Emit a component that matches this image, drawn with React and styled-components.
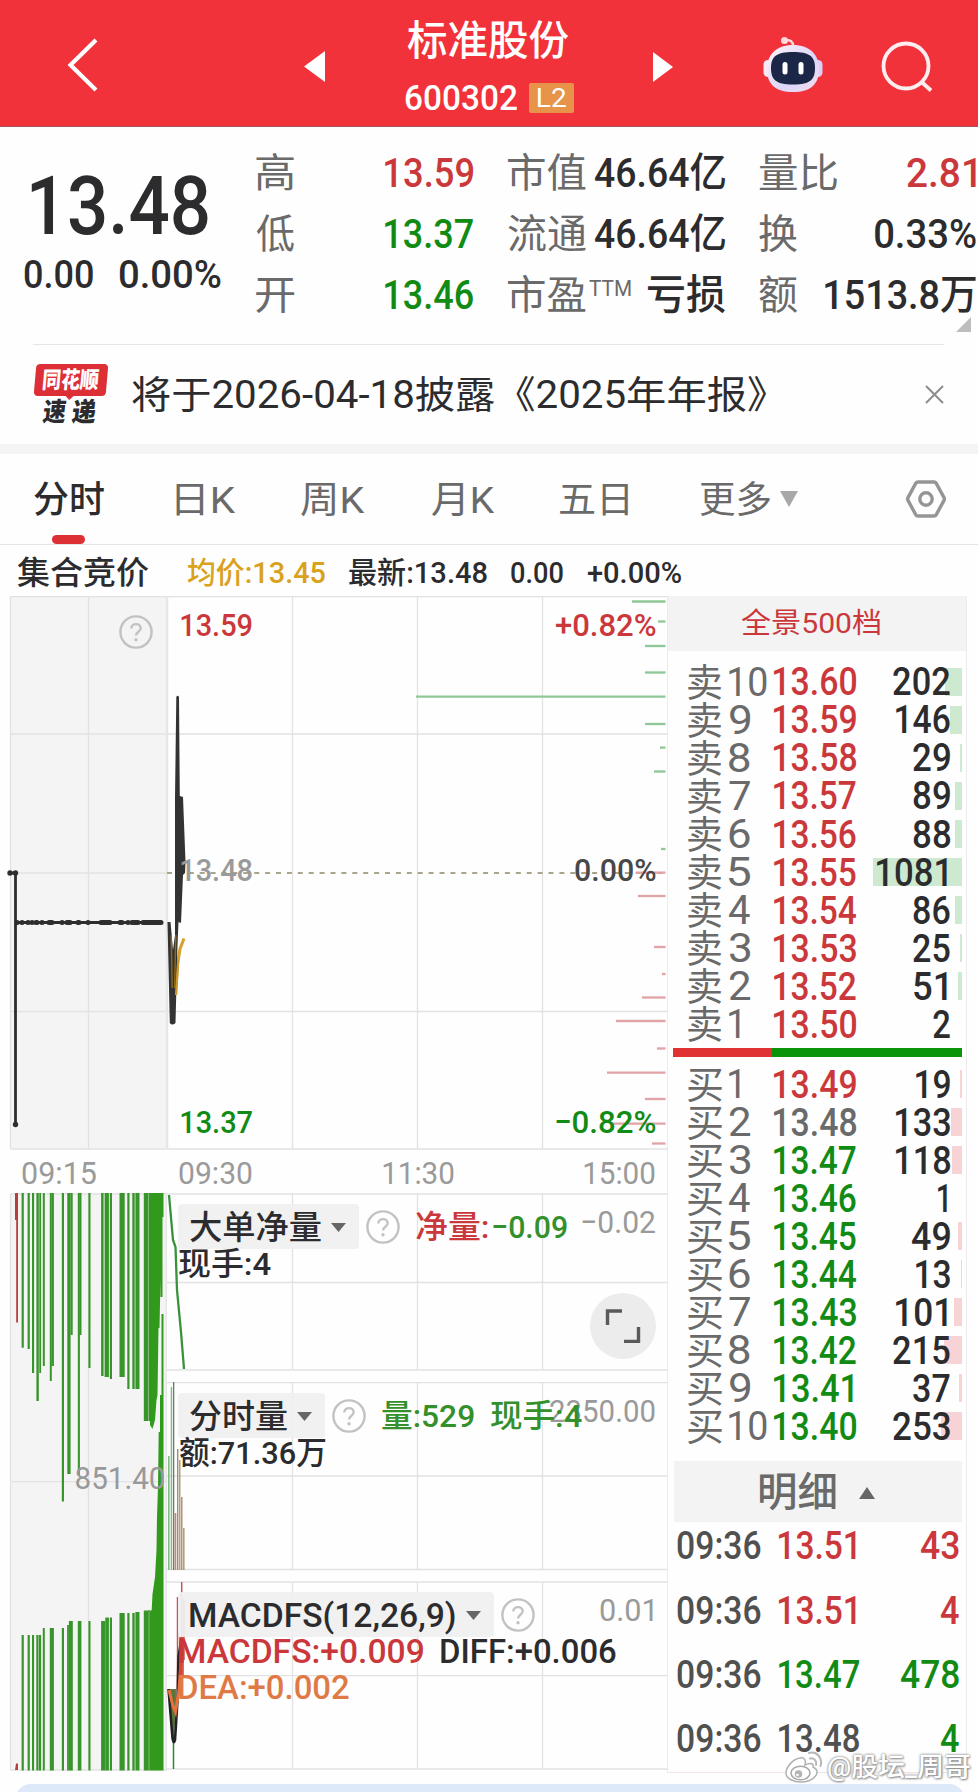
import React, { useLayoutEffect, useState } from "react";
import styled, { createGlobalStyle } from "styled-components";

const FONT = '"Roboto", "Noto Sans CJK SC", sans-serif';
const RED = "#cb383c";
const GREEN = "#118b14";
const INK = "#2c2c2e";
const GRAY = "#6a6a6a";
const MUTE = "#9a9a9a";

const Global = createGlobalStyle`
  * { box-sizing: border-box; }
  body { margin: 0; background: #fefefe; font-family: ${FONT}; }
  svg { display: block; flex-shrink: 0; }
`;

/* ---------- text that is condensed to a given ink width ---------- */

const FitBox = styled.span`
  display: block;
  flex-shrink: 0;
  width: ${(p) => p.$w}px;
  height: ${(p) => p.$size}px;
  margin-left: ${(p) => p.$ml || 0}px;
  margin-right: ${(p) => p.$mr || 0}px;
  position: relative;
`;

const FitInner = styled.span`
  display: inline-block;
  white-space: pre;
  transform-origin: 0 50%;
  font-family: ${FONT};
  font-size: ${(p) => p.$size}px;
  font-weight: ${(p) => p.$weight};
  line-height: ${(p) => p.$size}px;
  color: ${(p) => p.$color};
  text-shadow: ${(p) => p.$shadow || "none"};
`;

let canvas;
function measure(text, size, weight) {
  canvas = canvas || document.createElement("canvas");
  const ctx = canvas.getContext("2d");
  ctx.font = `${weight} ${size}px ${FONT}`;
  const m = ctx.measureText(text);
  return { left: m.actualBoundingBoxLeft, width: m.actualBoundingBoxLeft + m.actualBoundingBoxRight };
}

function Fit({ children, w, size, color = INK, weight = 500, ml, mr, shadow }) {
  const [t, setT] = useState("none");
  useLayoutEffect(() => {
    const m = measure(children, size, weight);
    const k = w / m.width;
    setT(`translateX(${m.left * k}px) scaleX(${k})`);
  }, [children, w, size, weight]);
  return (
    <FitBox $w={w} $size={size} $ml={ml} $mr={mr}>
      <FitInner $size={size} $weight={weight} $color={color} $shadow={shadow} style={{ transform: t }}>
        {children}
      </FitInner>
    </FitBox>
  );
}

/* ---------- header ---------- */

const Page = styled.div`
  width: 978px;
  height: 1792px;
  overflow: hidden;
  background: #fefefe;
`;

const Header = styled.header`
  height: 127px;
  background: #f2323a;
  border-bottom: 1px solid #a4545a;
  display: flex;
`;

const Slot = styled.div`
  margin-left: ${(p) => p.$left}px;
  margin-top: ${(p) => p.$top}px;
  flex-shrink: 0;
`;

const TitleBlock = styled.div`
  width: 170px;
  margin-left: 80px;
  padding-top: 21px;
`;

const CodeLine = styled.div`
  display: flex;
  align-items: center;
  height: 30px;
  margin-top: 21px;
`;

const LevelBadge = styled.span`
  width: 45px;
  height: 30px;
  margin-left: 12px;
  background: #e8934a;
  border-radius: 2px;
  display: flex;
  align-items: center;
  justify-content: center;
`;

function Robot() {
  return (
    <svg width="60" height="58" viewBox="0 0 60 58">
      <defs>
        <linearGradient id="shell" x1="0" y1="0" x2="1" y2="1">
          <stop offset="0" stopColor="#fff3f6" />
          <stop offset="0.6" stopColor="#dcd6fa" />
          <stop offset="1" stopColor="#f6dcea" />
        </linearGradient>
      </defs>
      <path d="M22 4 Q30 3 30.500 11" fill="none" stroke="#ffd9dc" strokeWidth="2.500" />
      <circle cx="21.500" cy="4.500" r="3.500" fill="#ffd9dc" />
      <rect x="0.500" y="24" width="9" height="17" rx="4.500" fill="#fbeaf3" />
      <rect x="50.500" y="24" width="9" height="17" rx="4.500" fill="#d9d0f8" />
      <path d="M30 9 C47 9 56 19 56 33 C56 48 48 56 30 56 C12 56 4 48 4 33 C4 19 13 9 30 9Z" fill="url(#shell)" />
      <path d="M30 16 C46 16 52 20 52 32 C52 43 48 48.500 30 48.500 C12 48.500 8 43 8 32 C8 20 14 16 30 16Z" fill="#1c2748" />
      <rect x="19.500" y="26" width="5" height="12.500" rx="2.500" fill="#fff" />
      <rect x="35.500" y="26" width="5" height="12.500" rx="2.500" fill="#fff" />
    </svg>
  );
}

function TopBar() {
  return (
    <Header>
      <Slot $left={66} $top={38}>
        <svg width="32" height="54" viewBox="0 0 32 54">
          <path d="M30 2 L4.500 27 L30 52" fill="none" stroke="#fff" strokeWidth="4.200" />
        </svg>
      </Slot>
      <Slot $left={206} $top={51}>
        <svg width="21" height="31" viewBox="0 0 21 31"><path d="M0 15.500 L21 0 V31Z" fill="#fff" /></svg>
      </Slot>
      <TitleBlock>
        <Fit w={162} size={41} color="#fff" ml={2}>标准股份</Fit>
        <CodeLine>
          <Fit w={112} size={35} color="#fff">600302</Fit>
          <LevelBadge><Fit w={28} size={26} color="#fff" weight={400}>L2</Fit></LevelBadge>
        </CodeLine>
      </TitleBlock>
      <Slot $left={78} $top={52}>
        <svg width="20" height="30" viewBox="0 0 20 30"><path d="M20 15 L0 0 V30Z" fill="#fff" /></svg>
      </Slot>
      <Slot $left={90} $top={36}><Robot /></Slot>
      <Slot $left={58} $top={40}>
        <svg width="54" height="54" viewBox="0 0 54 54">
          <circle cx="25" cy="26" r="22.500" fill="none" stroke="#ffeef0" strokeWidth="3.800" />
          <path d="M40 41.500 L50 50.500" stroke="#ffeef0" strokeWidth="3.800" />
        </svg>
      </Slot>
    </Header>
  );
}

/* ---------- quote summary ---------- */

const Quote = styled.section`
  height: 217px;
  display: flex;
`;

const PriceBlock = styled.div`
  width: 256px;
  padding-top: 38px;
`;

const ChangeLine = styled.div`
  display: flex;
  margin-top: 9px;
  padding-left: 24px;
`;

const Stats = styled.div`
  display: grid;
  grid-template-columns: 129px 123px 87px 130px 34px 217px;
  grid-auto-rows: 61px;
  padding-top: 16px;
`;

const Cell = styled.div`
  display: flex;
  align-items: center;
  justify-content: ${(p) => (p.$end ? "flex-end" : "flex-start")};
`;

const Spread = styled(Cell)`
  grid-column: 6;
  justify-content: space-between;
`;

const Raised = styled.span`
  margin-bottom: 14px;
`;

const Fold = styled.div`
  align-self: flex-end;
  margin: 0 0 12px -20px;
`;

const STATS = [
  { l: "高", v: "13.59", c: RED, l2: "市值", v2: "46.64亿", w2: 130, l3: "量比", lw: 78, v3: "2.81", w3: 69, c3: RED },
  { l: "低", v: "13.37", c: GREEN, l2: "流通", v2: "46.64亿", w2: 130, l3: "换", lw: 38, v3: "0.33%", w3: 101, c3: INK },
  { l: "开", v: "13.46", c: GREEN, l2: "市盈", ttm: true, v2: "亏损", w2: 77, l3: "额", lw: 38, v3: "1513.8万", w3: 151, c3: INK },
];

function QuoteSummary() {
  return (
    <Quote>
      <PriceBlock>
        <Fit w={177} size={82} ml={31}>13.48</Fit>
        <ChangeLine>
          <Fit w={69} size={38}>0.00</Fit>
          <Fit w={102} size={38} ml={26}>0.00%</Fit>
        </ChangeLine>
      </PriceBlock>
      <Stats>
        {STATS.map((s) => (
          <React.Fragment key={s.l}>
            <Cell><Fit w={38} size={40} color={GRAY} weight={400}>{s.l}</Fit></Cell>
            <Cell><Fit w={88} size={41} color={s.c}>{s.v}</Fit></Cell>
            <Cell>
              <Fit w={78} size={40} color={GRAY} weight={400}>{s.l2}</Fit>
              {s.ttm && <Raised><Fit w={42} size={22} color={GRAY} weight={400} ml={3}>TTM</Fit></Raised>}
            </Cell>
            <Cell $end><Fit w={s.w2} size={41}>{s.v2}</Fit></Cell>
            <Spread>
              <Fit w={s.lw} size={40} color={GRAY} weight={400}>{s.l3}</Fit>
              <Fit w={s.w3} size={41} color={s.c3}>{s.v3}</Fit>
            </Spread>
          </React.Fragment>
        ))}
      </Stats>
      <Fold>
        <svg width="15" height="15" viewBox="0 0 15 15"><path d="M15 0 V15 H0Z" fill="#bdbdbd" /></svg>
      </Fold>
    </Quote>
  );
}

/* ---------- news ---------- */

const News = styled.section`
  height: 100px;
  margin: 0 34px 0 33px;
  border-top: 1px solid #e6e6ea;
  display: flex;
  align-items: center;
`;

const Logo = styled.div`
  width: 76px;
  height: 62px;
  margin: 0 23px 0 0;
`;

const LogoTop = styled.div`
  position: relative;
  width: 72px;
  height: 32px;
  margin-left: 2px;
  background: #dd3036;
  border-radius: 4px;
  transform: skewX(-5deg);
  display: flex;
  align-items: center;
  justify-content: center;
  &::after {
    content: "";
    position: absolute;
    left: 31px;
    top: 31px;
    border: 5px solid transparent;
    border-top-color: #dd3036;
    border-bottom: 0;
  }
`;

const LogoBottom = styled.div`
  display: flex;
  margin: 3px 0 0 10px;
  transform: skewX(-7deg);
`;

const Push = styled.div`
  margin-left: auto;
`;

function NewsRow() {
  return (
    <News>
      <Logo>
        <LogoTop><Fit w={56} size={23} color="#fff" weight={900}>同花顺</Fit></LogoTop>
        <LogoBottom>
          <Fit w={23} size={26} weight={900}>速</Fit>
          <Fit w={24} size={26} weight={900} ml={6}>递</Fit>
        </LogoBottom>
      </Logo>
      <Fit w={634} size={38} weight={400}>将于2026-04-18披露《2025年年报》</Fit>
      <Push>
        <svg width="19" height="19" viewBox="0 0 19 19"><path d="M1 1 L18 18 M18 1 L1 18" stroke="#8c8c8c" strokeWidth="2" /></svg>
      </Push>
    </News>
  );
}

/* ---------- tabs ---------- */

const Tabs = styled.nav`
  height: 101px;
  border-top: 10px solid #f4f4f4;
  border-bottom: 1px solid #e4e4e4;
  display: flex;
  align-items: center;
`;

const Tab = styled.div`
  position: relative;
  height: 90px;
  display: flex;
  align-items: center;
  padding-top: 2px;
  margin-left: ${(p) => p.$left}px;
  &::after {
    content: "";
    display: ${(p) => (p.$active ? "block" : "none")};
    position: absolute;
    bottom: 0;
    left: 18px;
    width: 33px;
    height: 9px;
    border-radius: 5px;
    background: #dd3034;
  }
`;

const TABS = [
  ["分时", 34, 70], ["日K", 72, 60], ["周K", 65, 64], ["月K", 67, 63], ["五日", 65, 68], ["更多", 72, 70],
];

function TabBar() {
  return (
    <Tabs>
      {TABS.map(([t, left, w], i) => (
        <Tab key={t} $left={left} $active={i === 0}>
          <Fit w={w} size={37} color={i ? GRAY : INK} weight={i ? 400 : 500}>{t}</Fit>
        </Tab>
      ))}
      <Slot $left={10} $top={0}>
        <svg width="18" height="16" viewBox="0 0 18 16"><path d="M0 0 H18 L9 16Z" fill="#a8a8a8" /></svg>
      </Slot>
      <Slot $left={108} $top={0}>
        <svg width="40" height="38" viewBox="0 0 40 38">
          <path d="M12 2 H28 Q29.500 2 30.300 3.400 L38 17.600 Q38.700 19 38 20.400 L30.300 34.600 Q29.500 36 28 36 H12 Q10.500 36 9.700 34.600 L2 20.400 Q1.300 19 2 17.600 L9.700 3.400 Q10.500 2 12 2Z" fill="none" stroke="#959595" strokeWidth="3.400" />
          <circle cx="20" cy="19" r="6.200" fill="none" stroke="#959595" strokeWidth="3.400" />
        </svg>
      </Slot>
    </Tabs>
  );
}

const InfoRow = styled.div`
  height: 51px;
  display: flex;
  align-items: center;
  padding: 4px 0 0 17px;
`;

/* ---------- charts ---------- */

const Main = styled.main`
  display: flex;
  height: 1177px;
`;

const ChartColumn = styled.div`
  width: 668px;
  border-right: 1px solid #ececec;
`;

const PricePanel = styled.div`
  position: relative;
  height: 554px;
`;

const Over = styled.div`
  position: absolute;
  left: ${(p) => p.$x}px;
  top: ${(p) => p.$y}px;
`;

const TimeAxis = styled.div`
  height: 43px;
  display: flex;
  align-items: center;
  padding: 3px 0 0 22px;
`;

const Lower = styled.div`
  display: flex;
`;

const SubColumn = styled.div`
  width: 501px;
`;

const SubPanel = styled.div`
  position: relative;
  height: ${(p) => p.$h}px;
  padding: 11px 0 0 11px;
  > svg { position: absolute; left: 0; top: 0; }
`;

const TagRow = styled.div`
  position: relative;
  display: flex;
  align-items: center;
  height: 45px;
`;

const Tag = styled.div`
  width: ${(p) => p.$w}px;
  height: 45px;
  background: rgba(240, 240, 240, 0.93);
  border-radius: 4px;
  display: flex;
  align-items: center;
  justify-content: space-between;
  padding: 1px 13px 0 12px;
  margin-right: 7px;
`;

const Metric = styled.div`
  position: relative;
  display: flex;
  align-items: center;
  height: 29px;
  padding-left: 1px;
  margin-top: ${(p) => p.$mt || 0}px;
`;

const Expand = styled.button`
  position: absolute;
  left: 423px;
  top: 100px;
  width: 66px;
  height: 66px;
  padding: 0;
  border: 0;
  border-radius: 50%;
  background: #ececec;
  display: flex;
  align-items: center;
  justify-content: center;
`;

const Caret = () => (
  <svg width="15" height="9" viewBox="0 0 15 9"><path d="M0 0 H15 L7.500 9Z" fill="#666" /></svg>
);

const Help = () => (
  <svg width="34" height="34" viewBox="0 0 34 34">
    <circle cx="17" cy="17" r="15.600" fill="none" stroke="#c2c2c2" strokeWidth="2.400" />
    <path d="M12.300 13.500 C12.500 7.500 21.700 7.800 21.700 13.300 C21.700 16.700 17 16.800 17 20.500" fill="none" stroke="#c2c2c2" strokeWidth="2.400" />
    <circle cx="17" cy="24.800" r="1.700" fill="#c2c2c2" />
  </svg>
);

const GRID = "#e2e2e2";

const DEPTH = [
  [601.5, 632, 1], [621.5, 658, 1], [646, 645, 1], [672.5, 645, 1], [696.7, 416, 1], [724, 645, 1], [747.6, 660, 1],
  [771.5, 654, 1], [849, 661, 1], [872.6, 636, 0], [896, 638, 0], [947, 654, 0], [974, 662, 0], [997.5, 642, 0],
  [1021, 616, 0], [1048.5, 657, 0], [1072.7, 607, 0], [1099, 645, 0], [1123.7, 612, 0], [1143.5, 652, 0],
];

const TICKS = [[17, 2], [22, 1], [28, 1], [32, 1], [36, 3], [42, 2], [49, 5], [62, 2], [67, 5], [78, 3], [88, 2], [101, 11], [120, 4], [128, 1], [132, 8], [143, 20]];

function PriceChart() {
  return (
    <PricePanel>
      <svg width="668" height="554" viewBox="0 596 668 554">
        <rect x="10.500" y="596.500" width="156.500" height="552.500" fill="#f4f4f4" />
        <path d="M10.500 596.500 H668 M10.500 734 H668 M10.500 873 H167 M10.500 1011.500 H668 M10.500 1149 H668 M10.500 596 V1149 M88.500 596 V1149 M292.500 596 V1149 M417.500 596 V1149 M542.500 596 V1149" fill="none" stroke={GRID} strokeWidth="1.300" />
        <path d="M167 596 V1149" stroke="#e6e6e6" strokeWidth="2.500" />
        <path d="M167 873 H668" stroke="#a8a58a" strokeWidth="2.200" strokeDasharray="5 5.900" />
        {DEPTH.map(([y, x, g]) => (
          <path key={y} d={`M${x} ${y} H665.500`} stroke={g ? "#8fc896" : "#e0a3a6"} strokeWidth="2.300" />
        ))}
        <path d="M10 873 H15.500 V1124.500 M15.500 922.500 H163" fill="none" stroke="#2e2e2e" strokeWidth="2.800" strokeLinejoin="round" />
        <g fill="#2e2e2e">
          <circle cx="10" cy="873" r="2.700" /><circle cx="15.500" cy="873" r="2.700" /><circle cx="15.500" cy="1124.500" r="2.700" />
        </g>
        <g stroke="#2e2e2e" strokeWidth="5" strokeLinecap="round">
          {TICKS.map(([x, w]) => <path key={x} d={`M${x} 922.500 h${Math.max(w - 2, 0.1)}`} />)}
        </g>
        <path d="M175.500 995 L177.500 965 L180 949 L184 938.500" fill="none" stroke="#d6a02a" strokeWidth="3" />
        <path d="M167.500 922 L170.500 922 L173 950 L175 935 L175 798 L176.300 697 Q177.500 694.500 179 697 L179.800 796 L183 797 L185.500 862 L185 873 L183 875 L181 923 L178.500 922 L177.500 945 L175.500 1023 Q172 1026 169.800 1023Z" fill="#333" />
        <path d="M171.200 935 L172.200 988 M175.800 935 L174.600 988" stroke="#8d6a1c" strokeWidth="1.400" />
        <path d="M176 995 L178.200 960" stroke="#c9962a" strokeWidth="2.200" />
      </svg>
      <Over $x={118.5} $y={19}><Help /></Over>
      <Over $x={181} $y={13}><Fit w={71} size={32} color={RED}>13.59</Fit></Over>
      <Over $x={181} $y={258}><Fit w={71} size={32} color={MUTE}>13.48</Fit></Over>
      <Over $x={181} $y={510}><Fit w={71} size={32} color={GREEN}>13.37</Fit></Over>
      <Over $x={556} $y={13}><Fit w={100} size={32} color={RED}>+0.82%</Fit></Over>
      <Over $x={575} $y={258}><Fit w={81} size={32} color="#484848">0.00%</Fit></Over>
      <Over $x={556} $y={510}><Fit w={100} size={32} color={GREEN}>−0.82%</Fit></Over>
    </PricePanel>
  );
}

const UPPER = [
  [21.6, 2.2, 1347.7], [27.6, 2.2, 1349], [32, 2.1, 1373], [36.4, 2.4, 1401], [39.3, 1.8, 1373], [42.8, 2, 1366], [49.8, 2, 1381],
  [51.7, 2.2, 1366], [61.8, 2.2, 1501.5], [67.3, 3.3, 1474], [70.5, 2.2, 1335], [77.8, 2.1, 1475], [79.7, 1.8, 1335], [88.4, 2.1, 1368],
  [101.1, 2.5, 1376], [104.6, 4.3, 1377], [109.8, 2.2, 1379], [119.5, 5.2, 1377], [127.3, 2.2, 1389], [132.3, 2.4, 1389],
  [135.4, 4.1, 1389], [143.8, 4.4, 1421], [148.5, 1.5, 1421],
];
const LOWER = [
  [21.6, 2.2, 1635], [27.6, 2.2, 1635], [32, 2.1, 1635], [36.3, 2.1, 1635], [38.8, 2.3, 1635], [42.8, 2, 1628], [49.8, 4.1, 1628], [61.8, 2.2, 1628],
  [67.1, 1.8, 1625], [68.9, 3.9, 1621], [77.8, 3.6, 1621], [88.4, 2.1, 1621], [101.1, 4.2, 1621], [105.3, 3.6, 1617.5],
  [109.8, 2.2, 1617.5], [119.5, 5.2, 1613], [127.3, 2.2, 1613], [132.3, 2.4, 1613], [135.4, 4.1, 1612], [143.8, 4.4, 1610.5], [148.2, 1.6, 1610],
];

function AuctionVolume() {
  return (
    <svg width="167" height="579" viewBox="0 1193 167 579">
      <rect x="10.500" y="1194" width="156.500" height="576" fill="#f4f4f4" />
      <path d="M10.500 1194 H167 M10.500 1481.700 H167 M10.500 1770 H167 M10.500 1194 V1770 M88.500 1194 V1770" fill="none" stroke={GRID} strokeWidth="1.300" />
      <path d="M166.500 1194 V1770" stroke="#e6e6e6" strokeWidth="2" />
      <path d="M15 1193 H18 V1322.500 H16.200 V1220 H15Z M15 1770 L16 1763.500 H18 V1770Z" fill="#b5403a" />
      <g fill="#38952b">
        {UPPER.map(([x, w, y]) => <rect key={x} x={x} y="1193" width={w} height={y - 1193} />)}
        {LOWER.map(([x, w, y]) => <rect key={x} x={x} y={y} width={w} height={1770.5 - y} />)}
      </g>
      <path d="M150 1193 H163.500 V1217 H162.500 V1297 H160.500 V1279 L159.500 1328 H158.500 L157.500 1395 L156.500 1400 L155 1420 L152.500 1429 L150 1425Z" fill="#319a1c" />
      <path d="M161.500 1314 H163.500 V1770.500 H150 V1611 L151.700 1610 L152.500 1594 L155 1577 L156.500 1550 L157 1517 L158 1487 L158.700 1432 H160 V1395 H161.500Z" fill="#319a1c" />
      <text x="74.500" y="1489" textLength="91" lengthAdjust="spacingAndGlyphs" fontSize="31" fontWeight="400" fontFamily={FONT} fill="#999">851.40</text>
    </svg>
  );
}

function gridPath(top, mid, bottom) {
  return `M0 ${top} H501 M0 ${mid} H501 M0 ${bottom} H501 M125.500 ${top} V${bottom} M250.500 ${top} V${bottom} M375.500 ${top} V${bottom}`;
}

const VOL = [[168, 1.6, 1456, "#7cbc80"], [170.7, 1.5, 1387, "#86b88a"], [173, 1.3, 1382, "#6e7a66"], [174.7, 1.6, 1513, "#c98472"], [177, 1.4, 1449, "#9c9070"], [179, 1.5, 1460, "#b0a182"], [181, 1.5, 1497, "#c08c70"], [183.2, 1.3, 1528, "#9c8a66"]];

function SubCharts() {
  return (
    <SubColumn>
      <SubPanel $h={189}>
        <svg width="501" height="189" viewBox="0 1193 501 189">
          <path d={gridPath(1194, 1282.5, 1370)} fill="none" stroke={GRID} strokeWidth="1.300" />
          <path d="M2 1195 L6 1240 L8.500 1247 L10 1290 L14 1332 L17 1369" fill="none" stroke="#38923a" strokeWidth="2.300" />
        </svg>
        <TagRow>
          <Tag $w={181}><Fit w={131} size={33}>大单净量</Fit><Caret /></Tag>
          <Help />
          <Fit w={72} size={32} color={RED} ml={16}>净量:</Fit>
          <Fit w={74} size={32} color="#33902a" ml={5}>−0.09</Fit>
        </TagRow>
        <Metric><Fit w={92} size={32}>现手:4</Fit></Metric>
        <Over $x={415} $y={13}><Fit w={73} size={32} color={MUTE} weight={400}>−0.02</Fit></Over>
        <Expand>
          <svg width="36" height="34" viewBox="0 0 36 34">
            <path d="M2.500 16 V2 H17 M19 32.500 H33.500 V18" fill="none" stroke="#5a5a5a" strokeWidth="3.400" />
          </svg>
        </Expand>
      </SubPanel>
      <SubPanel $h={199}>
        <svg width="501" height="199" viewBox="0 1382 501 199">
          <path d={gridPath(1382.7, 1476, 1569.5)} fill="none" stroke={GRID} strokeWidth="1.300" />
          {VOL.map(([x, w, y, c]) => <rect key={x} x={x - 167} y={y} width={w} height={1570 - y} fill={c} />)}
        </svg>
        <Over $x={383} $y={13}><Fit w={105} size={32} color={MUTE} weight={400}>2350.00</Fit></Over>
        <TagRow>
          <Tag $w={147}><Fit w={97} size={33}>分时量</Fit><Caret /></Tag>
          <Help />
          <Fit w={92} size={32} color="#33902a" ml={16}>量:529</Fit>
          <Fit w={91} size={32} color="#33902a" ml={17}>现手:4</Fit>
        </TagRow>
        <Metric><Fit w={147} size={32}>额:71.36万</Fit></Metric>
      </SubPanel>
      <SubPanel $h={191}>
        <svg width="501" height="191" viewBox="0 1581 501 191">
          <path d={gridPath(1582, 1675.7, 1769)} fill="none" stroke={GRID} strokeWidth="1.300" />
          <path d="M10.500 1597 V1690 M14.700 1582 V1680 M17 1599 V1660" stroke="#c8545a" strokeWidth="1.500" />
          <path d="M1.500 1689 H9 V1712 L6.500 1740Z" fill="#6e7440" />
          <path d="M6.500 1690 V1769" stroke="#33803a" strokeWidth="1.500" />
          <path d="M1.500 1689 L5.500 1738 Q6.500 1745 8 1740 L10.500 1700 L11.500 1657 L14.500 1638" fill="none" stroke="#222" strokeWidth="2.600" />
          <path d="M2 1690 L6 1706 L8.500 1712 L12 1690 L13.500 1668 L16 1636" fill="none" stroke="#e8703a" strokeWidth="3" />
          <path d="M12 1637 H17 V1675 H12Z" fill="#d8382f" opacity="0.750" />
        </svg>
        <TagRow>
          <Tag $w={316}><Fit w={265} size={33}>MACDFS(12,26,9)</Fit><Caret /></Tag>
          <Help />
        </TagRow>
        <Metric>
          <Fit w={244} size={33} color={RED}>MACDFS:+0.009</Fit>
          <Fit w={175} size={33} ml={18}>DIFF:+0.006</Fit>
        </Metric>
        <Metric $mt={7}><Fit w={170} size={33} color="#df7a47">DEA:+0.002</Fit></Metric>
        <Over $x={433} $y={13}><Fit w={53} size={32} color={MUTE} weight={400}>0.01</Fit></Over>
      </SubPanel>
    </SubColumn>
  );
}

/* ---------- order book ---------- */

const BookColumn = styled.aside`
  position: relative;
  width: 299px;
  border-right: 1px solid #ececec;
  border-bottom: 1px solid #f0e4e4;
`;

const BookHead = styled.div`
  height: 55px;
  background: #f3f3f4;
  display: flex;
  align-items: center;
  padding-left: 73px;
`;

const BookSide = styled.div`
  margin-top: ${(p) => p.$mt}px;
`;

const BookRow = styled.div`
  position: relative;
  height: 38.080px;
  display: grid;
  grid-template-columns: 41px 45px 1fr auto;
  align-items: center;
  padding: 0 16px 0 20px;
`;

const DepthBar = styled.i`
  position: absolute;
  right: 4px;
  top: 5px;
  height: 28px;
  background: ${(p) => (p.$sell ? "#cde9cf" : "#f8d3d6")};
`;

const Balance = styled.div`
  height: 9px;
  margin: 5px 4px 0 5px;
  background: linear-gradient(90deg, #e03133 99px, #099409 99px);
`;

const SELL = [[10, "13.60", 202], [9, "13.59", 146], [8, "13.58", 29], [7, "13.57", 89], [6, "13.56", 88], [5, "13.55", 1081], [4, "13.54", 86], [3, "13.53", 25], [2, "13.52", 51], [1, "13.50", 2]];
const BUY = [[1, "13.49", 19], [2, "13.48", 133], [3, "13.47", 118], [4, "13.46", 1], [5, "13.45", 49], [6, "13.44", 13], [7, "13.43", 101], [8, "13.42", 215], [9, "13.41", 37], [10, "13.40", 253]];
const VOL_W = { 202: 57, 146: 54, 29: 37, 89: 37, 88: 37, 1081: 70, 86: 37, 25: 37, 51: 33, 2: 17, 19: 34, 133: 54, 118: 54, 1: 9, 49: 38, 13: 34, 101: 51, 215: 57, 37: 37, 253: 57 };

function Level({ side, n, price, vol }) {
  const color = Number(price) > 13.48 ? RED : price === "13.48" ? GRAY : GREEN;
  return (
    <BookRow>
      {vol > 10 && <DepthBar $sell={side === "卖"} style={{ width: Math.max(1.2, (vol * 89) / 1081) }} />}
      <Fit w={34} size={38} color={GRAY} weight={400}>{side}</Fit>
      <Fit w={n === 10 ? 38 : n === 1 ? 11 : 21} size={40} color={GRAY} weight={400}>{String(n)}</Fit>
      <Fit w={price.endsWith("1") ? 79 : 82} size={38.5} color={color}>{price}</Fit>
      <Fit w={VOL_W[vol]} size={38.5} mr={vol % 10 === 1 ? 3 : 0}>{String(vol)}</Fit>
    </BookRow>
  );
}

const DetailHead = styled.div`
  height: 61px;
  margin: 15px 4px 0 6px;
  background: #f3f3f3;
  display: flex;
  align-items: center;
  padding: 3px 0 0 85px;
  gap: 23px;
`;

const Trade = styled.div`
  height: 64.300px;
  display: grid;
  grid-template-columns: 102px 1fr auto;
  align-items: center;
  padding: 0 7px 0 9px;
`;

const Trades = styled.div`
  margin-top: -7.500px;
`;

const TRADES = [["13.51", 77, "43", 38, RED, RED], ["13.51", 77, "4", 18, RED, RED], ["13.47", 80, "478", 58, GREEN, GREEN], ["13.48", 80, "4", 18, "#505050", GREEN]];

const Watermark = styled.div`
  position: absolute;
  left: 117px;
  top: 1155px;
  display: flex;
  align-items: center;
  height: 32px;
`;

function OrderBook() {
  return (
    <BookColumn>
      <BookHead><Fit w={139} size={28} color={RED} weight={400}>全景500档</Fit></BookHead>
      <BookSide $mt={11.5}>
        {SELL.map(([n, p, v]) => <Level key={n} side="卖" n={n} price={p} vol={v} />)}
      </BookSide>
      <Balance />
      <BookSide $mt={7.5}>
        {BUY.map(([n, p, v]) => <Level key={n} side="买" n={n} price={p} vol={v} />)}
      </BookSide>
      <DetailHead>
        <Fit w={77} size={40} color={GRAY}>明细</Fit>
        <svg width="16" height="12" viewBox="0 0 16 12"><path d="M8 0 L16 12 H0Z" fill="#666" /></svg>
      </DetailHead>
      <Trades>
        {TRADES.map(([p, pw, q, qw, c, qc], i) => (
          <Trade key={i}>
            <Fit w={84} size={38} color="#505050">09:36</Fit>
            <Fit w={pw} size={38} color={c}>{p}</Fit>
            <Fit w={qw} size={38} color={qc}>{q}</Fit>
          </Trade>
        ))}
      </Trades>
      <Watermark>
        <svg width="38" height="32" viewBox="0 0 38 32">
          <path d="M15 7 C8 8 1 16 1 22 C1 28 9 31 16 31 C25 31 32 26 32 21 C32 18 30 17 28 16 C29 13 26 11 20 14 C21 10 20 6 15 7Z" fill="#fff" stroke="#b0b0b0" strokeWidth="1.500" />
          <ellipse cx="15.500" cy="22" rx="9.500" ry="6.800" fill="none" stroke="#a8a8a8" strokeWidth="1.500" />
          <circle cx="13.500" cy="23" r="3.800" fill="#b4b4b4" />
          <circle cx="12.500" cy="24" r="1.300" fill="#fff" />
          <path d="M25 7.500 C29 6.500 32 10 31 14 M24 2 C32 0 38 7 35.500 15" fill="none" stroke="#b8b8b8" strokeWidth="2" strokeLinecap="round" />
        </svg>
        <Fit w={142} size={26} color="#fff" ml={5} weight={500} shadow="0 0 2px #888, 1px 1px 2px #999, 0 0 3px #aaa">@股坛_周哥</Fit>
      </Watermark>
    </BookColumn>
  );
}

const BottomSheet = styled.div`
  height: 20px;
  margin: 11px 13px 0 15px;
  border-radius: 16px 16px 0 0;
  background: #dde8f9;
`;

export default function App() {
  return (
    <Page>
      <Global />
      <TopBar />
      <QuoteSummary />
      <NewsRow />
      <TabBar />
      <InfoRow>
        <Fit w={132} size={32}>集合竞价</Fit>
        <Fit w={138} size={30} color="#d9a11c" ml={38}>均价:13.45</Fit>
        <Fit w={138} size={30} ml={24}>最新:13.48</Fit>
        <Fit w={52} size={30} ml={24}>0.00</Fit>
        <Fit w={94} size={30} ml={24}>+0.00%</Fit>
      </InfoRow>
      <Main>
        <ChartColumn>
          <PriceChart />
          <TimeAxis>
            <Fit w={74} size={32} color={MUTE} weight={400}>09:15</Fit>
            <Fit w={73} size={32} color={MUTE} weight={400} ml={83}>09:30</Fit>
            <Fit w={71} size={32} color={MUTE} weight={400} ml={131}>11:30</Fit>
            <Fit w={71} size={32} color={MUTE} weight={400} ml={130}>15:00</Fit>
          </TimeAxis>
          <Lower>
            <AuctionVolume />
            <SubCharts />
          </Lower>
        </ChartColumn>
        <OrderBook />
      </Main>
      <BottomSheet />
    </Page>
  );
}
